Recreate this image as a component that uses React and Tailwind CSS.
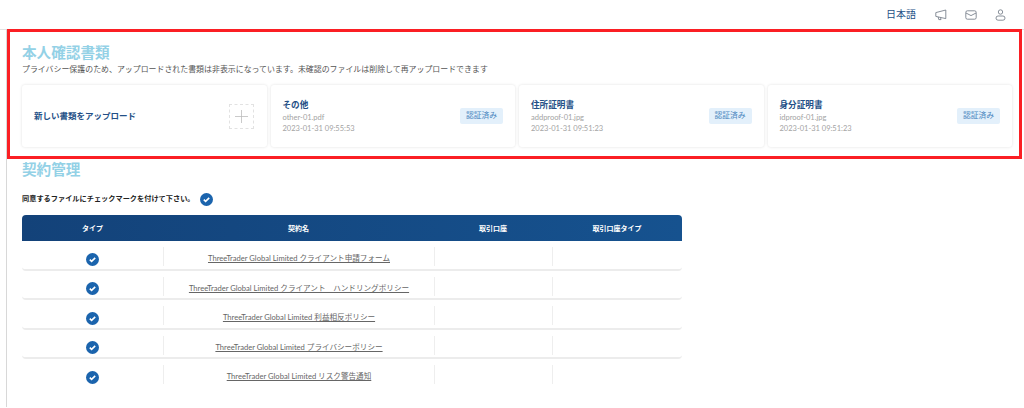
const font = { fontFamily: 'Lato, "Noto Sans CJK JP", sans-serif' }

const documents = [
  { title: 'その他', file: 'other-01.pdf', date: '2023-01-31 09:55:53' },
  { title: '住所証明書', file: 'addproof-01.jpg', date: '2023-01-31 09:51:23' },
  { title: '身分証明書', file: 'idproof-01.jpg', date: '2023-01-31 09:51:23' },
]

const contracts = [
  'ThreeTrader Global Limited クライアント申請フォーム',
  'ThreeTrader Global Limited クライアント　ハンドリングポリシー',
  'ThreeTrader Global Limited 利益相反ポリシー',
  'ThreeTrader Global Limited プライバシーポリシー',
  'ThreeTrader Global Limited リスク警告通知',
]

function CheckBadge() {
  return (
    <svg width="13" height="13" viewBox="0 0 13 13" className="shrink-0">
      <circle cx="6.5" cy="6.5" r="6.5" fill="#1b64ad" />
      <path d="M3.8 6.7 5.6 8.4 9.2 4.9" fill="none" stroke="#fff" strokeWidth="1.6" />
    </svg>
  )
}

function TopIcons() {
  return (
    <div className="flex items-center gap-[18px] text-[#6b7480]">
      <svg width="12" height="12" viewBox="0 0 12 12" fill="none" stroke="currentColor" strokeWidth="0.8">
        <path d="M.8 3.6 10.8 1v8.6L.8 7.4Z" strokeLinejoin="round" />
        <path d="M3.2 8 3.8 10.6H6L5.6 8.6" />
      </svg>
      <svg width="12" height="10" viewBox="0 0 12 10" fill="none" stroke="currentColor" strokeWidth="0.8">
        <rect x="0.8" y="0.8" width="10.4" height="8.4" rx="1.6" />
        <path d="M1 3 6 5.6 11 3" />
      </svg>
      <svg width="11" height="12" viewBox="0 0 11 12" fill="none" stroke="currentColor" strokeWidth="0.8">
        <circle cx="5.5" cy="3" r="2.2" />
        <rect x="1" y="7" width="9" height="4.2" rx="2.1" />
      </svg>
    </div>
  )
}

export default function App() {
  return (
    <div style={font} className="h-[408px] w-[1024px] overflow-hidden bg-white">
      <header className="flex h-[29px] items-center justify-end pr-[18px]">
        <span className="mr-[19px] text-[10px] text-[#234f86]">日本語</span>
        <TopIcons />
      </header>

      <div className="h-[379px] border-t border-[#e2e2e2]">
        <div className="ml-[6px] h-full border-l border-[#d8d8d8]">
          <section className="-mt-px h-[130px] w-[1015px] border-[3px] border-[#fb1f24] bg-white pl-[12px] pr-[7px] pt-[11px]">
            <h2 className="text-[14.6px] font-bold leading-[20px] text-[#93d1e6]">本人確認書類</h2>
            <p className="mt-px text-[7.93px] leading-[11px] text-[#555]">
              プライバシー保護のため、アップロードされた書類は非表示になっています。未確認のファイルは削除して再アップロードできます
            </p>
            <div className="mt-[10px] grid grid-cols-4 gap-[4px]">
              <div className="flex h-[62px] items-center justify-between rounded-[3px] bg-white pl-[12px] pr-[13px] shadow-[0_0_3px_rgba(0,0,0,0.12)]">
                <span className="text-[8.5px] font-bold text-[#234f86]">新しい書類をアップロード</span>
                <span className="flex h-[25px] w-[25px] items-center justify-center border border-dashed border-[#e2e2e2]">
                  <svg width="13" height="13" viewBox="0 0 13 13" stroke="#bdbdbd" strokeWidth="0.8">
                    <path d="M6.5 0v13M0 6.5h13" />
                  </svg>
                </span>
              </div>
              {documents.map((doc) => (
                <div
                  key={doc.title}
                  className="flex h-[62px] items-center justify-between rounded-[3px] bg-white pl-[12px] pr-[12px] shadow-[0_0_3px_rgba(0,0,0,0.12)]"
                >
                  <div className="pt-[1px]">
                    <h3 className="text-[8.6px] font-bold leading-[12px] text-[#234f86]">{doc.title}</h3>
                    <p className="mt-px text-[7.5px] leading-[11px] text-[#a3a3a3]">{doc.file}</p>
                    <p className="text-[7.5px] leading-[11px] text-[#a3a3a3]">{doc.date}</p>
                  </div>
                  <span className="flex h-[16px] w-[43px] items-center justify-center rounded-[2px] bg-[#e3f0fb] text-[7.8px] text-[#4a87c0]">
                    認証済み
                  </span>
                </div>
              ))}
            </div>
          </section>

          <div className="pl-[15px]">
            <h2 className="mt-[1px] text-[14.6px] font-bold leading-[20px] text-[#93d1e6]">契約管理</h2>
            <div className="mt-[13px] flex items-center gap-[5px]">
              <span className="text-[7.2px] font-bold text-[#222]">同意するファイルにチェックマークを付けて下さい。</span>
              <CheckBadge />
            </div>

            <div className="mt-[9px] w-[660px]">
              <div className="grid h-[26px] grid-cols-[141px_271px_118px_130px] items-center rounded-t-[4px] bg-gradient-to-r from-[#134279] to-[#16528f] text-center text-[7px] font-bold text-white">
                <span>タイプ</span>
                <span>契約名</span>
                <span>取引口座</span>
                <span>取引口座タイプ</span>
              </div>
              {contracts.map((name, index) => (
                <div
                  key={name}
                  className={[
                    'grid h-[29.5px] grid-cols-[141px_271px_118px_130px] items-start rounded-b-[4px] pt-[6px] text-center',
                    index < contracts.length - 1 ? 'border-b-2 border-[#ececec]' : '',
                  ].join(' ')}
                >
                  <span className="flex justify-center pt-[5.5px]">
                    <CheckBadge />
                  </span>
                  <span className="flex h-[19px] items-center justify-center border-l border-[#eeeeee] pt-[5px] text-[7.6px] text-[#666] underline">
                    {name}
                  </span>
                  <span className="h-[19px] border-l border-[#eeeeee]" />
                  <span className="h-[19px] border-l border-[#eeeeee]" />
                </div>
              ))}
            </div>
          </div>
        </div>
      </div>
    </div>
  )
}
